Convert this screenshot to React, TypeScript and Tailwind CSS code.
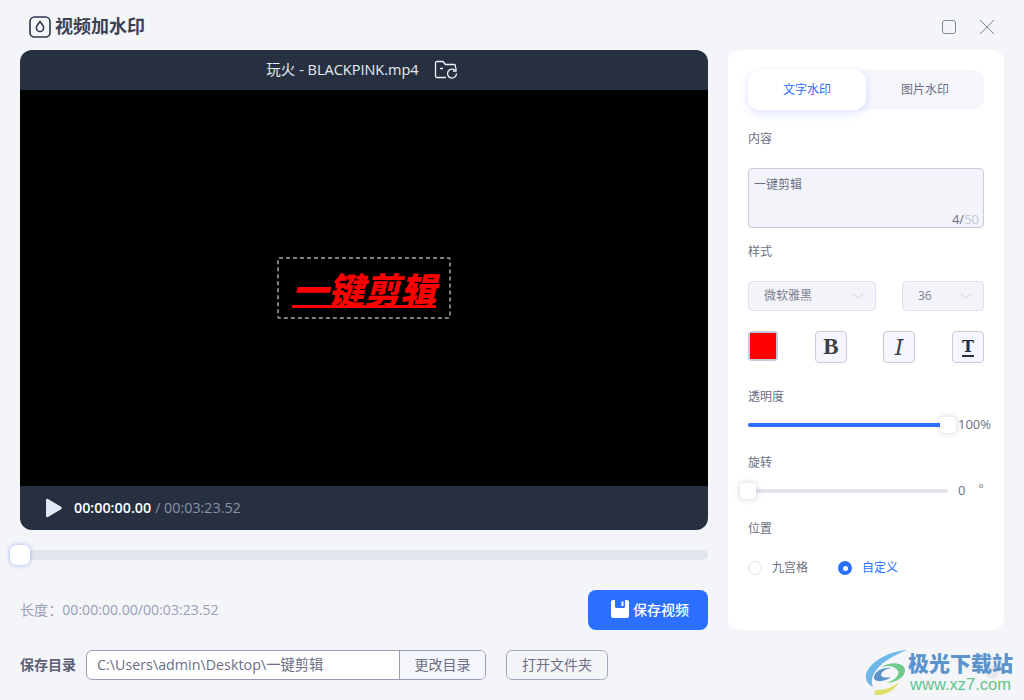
const font = { fontFamily: '"Open Sans", "Noto Sans CJK SC", sans-serif' };

function Label({ text, className }: { text: string; className: string }) {
  return <div className={`h-5 pt-[1px] text-xs leading-5 text-[#6c6f85] ${className}`}>{text}</div>;
}

function Chevron() {
  return (
    <svg width="12" height="8" viewBox="0 0 12 8" fill="none" stroke="#c5c8d6" strokeWidth="1">
      <path d="M1 1.500 L6 6.500 L11 1.500" />
    </svg>
  );
}

function StyleButton({ children, className }: { children: React.ReactNode; className: string }) {
  return (
    <div className={`flex h-8 w-8 items-center justify-center rounded border border-[#c9cbdc] bg-[#f5f6fd] ${className}`}>
      {children}
    </div>
  );
}

function Slider({ percent, thumbLeft, value, unit }: { percent: number; thumbLeft: string; value: string; unit?: string }) {
  return (
    <div className="mt-[11px] flex h-4 items-center">
      <div className="relative h-1 w-[200px] shrink-0 rounded-full bg-[#e3e5ee]">
        <div className="h-1 rounded-full bg-[#2a6fff]" style={{ width: `${percent}%` }} />
        <div className={`absolute top-[-6px] h-4 w-4 rounded-sm bg-white shadow-[0_0_6px_rgba(90,100,150,0.3)] ${thumbLeft}`} />
      </div>
      <span className="ml-[10px] shrink-0 text-[13px] text-[#6c6f85]">{value}</span>
      {unit && <span className="mb-1 ml-[13px] text-xs text-[#6c6f85]">{unit}</span>}
    </div>
  );
}

function SideBar() {
  return (
    <aside className="h-[580px] w-[276px] rounded-xl bg-white p-5">
      <div className="flex h-10 w-[236px] rounded-xl bg-[#f5f6fb] text-xs">
        <div className="flex w-[118px] items-center justify-center rounded-xl bg-white text-[#2a6fff] shadow-[0_3px_10px_rgba(70,100,255,0.18)]">
          文字水印
        </div>
        <div className="flex w-[118px] items-center justify-center text-[#6c6f85]">图片水印</div>
      </div>

      <Label text="内容" className="mt-[18px]" />
      <div className="relative mt-5 h-[60px] w-[236px] rounded border border-[#c9cbdc] bg-[#f3f4f9] px-[5px] py-[6px] text-xs leading-5 text-[#6c6f85]">
        一键剪辑
        <span className="absolute bottom-[-2px] right-[4px] text-[13px] leading-5">
          4/<span className="text-[#c5c8d6]">50</span>
        </span>
      </div>

      <Label text="样式" className="mt-[13px]" />
      <div className="mt-5 flex justify-between text-xs text-[#7b7e90]">
        <div className="flex h-[30px] w-32 items-center justify-between rounded border border-[#e0e2ea] bg-[#f3f4f9] pl-[15px] pr-[11px]">
          微软雅黑
          <Chevron />
        </div>
        <div className="flex h-[30px] w-[82px] items-center justify-between rounded border border-[#e0e2ea] bg-[#f3f4f9] pl-[15px] pr-[11px]">
          36
          <Chevron />
        </div>
      </div>

      <div className="mt-5 flex h-8 items-start">
        <div className="flex h-[30px] w-[30px] items-center justify-center rounded border-2 border-[#c5c8d8]">
          <div className="h-[26px] w-[26px] bg-[#ff0000]" />
        </div>
        <StyleButton className="ml-[37px]">
          <span className="text-[23px] font-bold text-[#3c3f46]" style={{ fontFamily: '"Liberation Serif", serif' }}>B</span>
        </StyleButton>
        <StyleButton className="ml-9">
          <span className="text-[22px] italic text-[#3c3f46]" style={{ fontFamily: '"DejaVu Serif", serif' }}>I</span>
        </StyleButton>
        <StyleButton className="ml-[37px]">
          <span className="border-b-2 border-[#263040] text-[16px] font-bold leading-[17px] text-[#263040]" style={{ fontFamily: '"DejaVu Serif", serif' }}>T</span>
        </StyleButton>
      </div>

      <Label text="透明度" className="mt-[23px]" />
      <Slider percent={100} thumbLeft="left-[192px]" value="100%" />

      <Label text="旋转" className="mt-[19px]" />
      <Slider percent={0} thumbLeft="left-[-8px]" value="0" unit="°" />

      <Label text="位置" className="mt-[19px]" />
      <div className="mt-5 flex h-5 items-center text-xs">
        <div className="h-[14px] w-[14px] rounded-full border border-[#dfe1e9] bg-white" />
        <span className="ml-[9px] pl-[1px] text-[#6c6f85]">九宫格</span>
        <div className="ml-[30px] flex h-[14px] w-[14px] items-center justify-center rounded-full bg-[#2a6fff]">
          <div className="h-[5px] w-[5px] rounded-full bg-white" />
        </div>
        <span className="ml-[10px] text-[#2a6fff]">自定义</span>
      </div>
    </aside>
  );
}

function VideoCard() {
  return (
    <div className="h-[480px] w-[688px] overflow-hidden rounded-xl bg-[#263040]">
      <div className="flex h-10 items-center justify-center pr-[4px] text-[14.500px] text-[#e8ebf2]">
        <span>玩火 - BLACKPINK.mp4</span>
        <svg className="ml-[15px]" width="24" height="20" viewBox="0 0 24 20" fill="none" stroke="#f0f2f7" strokeWidth="1.3">
          <path d="M12 17.500H3a1.500 1.500 0 0 1-1.500-1.500V3A1.500 1.500 0 0 1 3 1.500h6l2.500 3H20A1.500 1.500 0 0 1 21.500 6v2" />
          <path d="M6 8.500h3" />
          <path d="M22.500 13.500a4.500 4.500 0 1 1-1.400-3.200" />
          <path d="M22 8v3h-3" />
        </svg>
      </div>
      <div className="flex h-[396px] items-center justify-center bg-black">
        <div className="relative flex h-[62px] w-[174px] items-center justify-center">
          <svg className="absolute inset-0" width="174" height="62" fill="none" stroke="#a8a8a8" strokeWidth="1.500" strokeDasharray="4 3">
            <rect x="1" y="1" width="172" height="60" rx="1" />
          </svg>
          <span
            className="text-[36px] font-black italic leading-[40px] text-[#ff0000] underline decoration-[3px] underline-offset-[1px]"
            style={{ fontFamily: '"Noto Sans CJK SC", sans-serif' }}
          >
            一键剪辑
          </span>
        </div>
      </div>
      <div className="flex h-11 items-center pl-[25px] text-[14.300px]">
        <svg width="18" height="20" viewBox="0 0 18 20" fill="#e2e8f4">
          <path d="M1 2.200C1 1 2 .5 3 1l13 7.800c1 .6 1 1.800 0 2.400L3 19c-1 .5-2 0-2-1.200z" />
        </svg>
        <span className="ml-[11px] font-semibold text-white">00:00:00.00</span>
        <span className="ml-1 text-[#8b92a3]">/ 00:03:23.52</span>
      </div>
    </div>
  );
}

function Footer() {
  return (
    <div className="flex h-[30px] items-center text-sm">
      <span className="w-[66px] font-bold text-[#5c5f75]">保存目录</span>
      <div className="flex h-[30px] w-[400px] overflow-hidden rounded-md border border-[#9a9cb5] bg-white">
        <div className="flex w-[312px] items-center pl-[10px] text-[14.300px] text-[#6c6f85]">C:\Users\admin\Desktop\一键剪辑</div>
        <div className="flex flex-1 items-center justify-center border-l border-[#9a9cb5] bg-[#f5f6fb] text-[#6c6f85]">
          更改目录
        </div>
      </div>
      <div className="ml-5 flex h-[30px] w-[102px] items-center justify-center rounded-md border border-[#a5a7bc] text-[#6c6f85]">
        打开文件夹
      </div>
    </div>
  );
}

function SiteMark() {
  return (
    <div className="absolute bottom-[5px] right-[11px] flex items-start">
      <div className="absolute bottom-[16px] right-[14px] h-[14px] w-[14px] rounded-full bg-[#e6e8ee]" />
      <svg width="42" height="45" viewBox="0 0 42 45" fill="none">
        <path d="M42 0C26 1 6 10 1 24c-1 6 2 11 7 13C5 30 8 22 16 15 22 9 32 4 42 0z" fill="#6db8e8" />
        <path d="M17 17c7-5 18-5 22 0 4 6-4 15-17 16 8-3 13-8 11-12-3-5-10-6-16-4z" fill="#6fcb8c" />
        <path d="M10 45c11 1 20-5 24-13-6 5-14 8-22 8-3 1-3 3-2 5z" fill="#dfe06c" />
        <path d="M9 27c1-6 9-10 17-9-6 1-10 4-10 7 1 3 6 3 10 2-5 5-18 6-17 0z" fill="#5a94c8" />
      </svg>
      <div className="relative ml-[1px] flex flex-col items-center">
        <span className="text-[21px] font-black leading-[24px] text-[#5b93cc]" style={{ fontFamily: '"Noto Sans CJK SC", sans-serif' }}>
          极光下载站
        </span>
        <span className="text-[16.500px] leading-5 text-[#5fc48b]" style={{ fontFamily: '"Liberation Sans", sans-serif' }}>
          www.xz7.com
        </span>
      </div>
    </div>
  );
}

export default function App() {
  return (
    <div className="relative h-[700px] w-[1024px] overflow-hidden bg-[#f4f5f9]" style={font}>
      <header className="flex h-[50px] items-center justify-between px-[29px] pt-[3px]">
        <div className="flex items-center">
          <svg width="22" height="22" viewBox="0 0 22 22" fill="none" stroke="#2b3648" strokeWidth="1.600">
            <rect x="1" y="1" width="20" height="20" rx="4.500" />
            <path d="M11 5.500c2.200 2.600 3.600 4.400 3.600 6.400a3.600 3.600 0 0 1-7.200 0c0-2 1.400-3.800 3.600-6.400z" />
          </svg>
          <span className="ml-[4px] text-[18px] font-bold text-[#3a4354]">视频加水印</span>
        </div>
        <div className="flex items-center">
          <div className="h-[14px] w-[14px] rounded-[3px] border border-[#7f8797]" />
          <svg className="ml-[23px]" width="16" height="16" viewBox="0 0 16 16" stroke="#7f8797" strokeWidth="1">
            <path d="M1 1 L15 15 M15 1 L1 15" />
          </svg>
        </div>
      </header>

      <main className="flex gap-5 pl-5">
        <div className="w-[688px]">
          <VideoCard />
          <div className="relative mt-5 h-[10px] rounded-r-full bg-[#e3e5ee]">
            <div className="absolute left-[-10px] top-[-5px] h-5 w-5 rounded-md bg-white shadow-[0_0_4px_rgba(70,100,255,0.5)]" />
          </div>
          <div className="mt-[30px] flex h-10 items-center justify-between">
            <span className="text-[14.100px] text-[#9a9db3]">长度：00:00:00.00/00:03:23.52</span>
            <button className="flex h-10 w-[120px] items-center justify-center rounded-lg bg-[#2a6fff] pl-[4px] text-sm font-medium text-white">
              <svg className="mb-[2px] mr-[4px]" width="18" height="18" viewBox="0 0 18 18">
                <path fillRule="evenodd" fill="#fff" d="M2 0h14a2 2 0 0 1 2 2v14a2 2 0 0 1-2 2H2a2 2 0 0 1-2-2V2a2 2 0 0 1 2-2zm2 0v6.500a1.500 1.500 0 0 0 1.500 1.500h7a1.500 1.500 0 0 0 1.500-1.500V0zm6.500 1.500h2v4.500h-2z" />
              </svg>
              保存视频
            </button>
          </div>
          <div className="mt-5">
            <Footer />
          </div>
        </div>
        <SideBar />
      </main>

      <SiteMark />
    </div>
  );
}
